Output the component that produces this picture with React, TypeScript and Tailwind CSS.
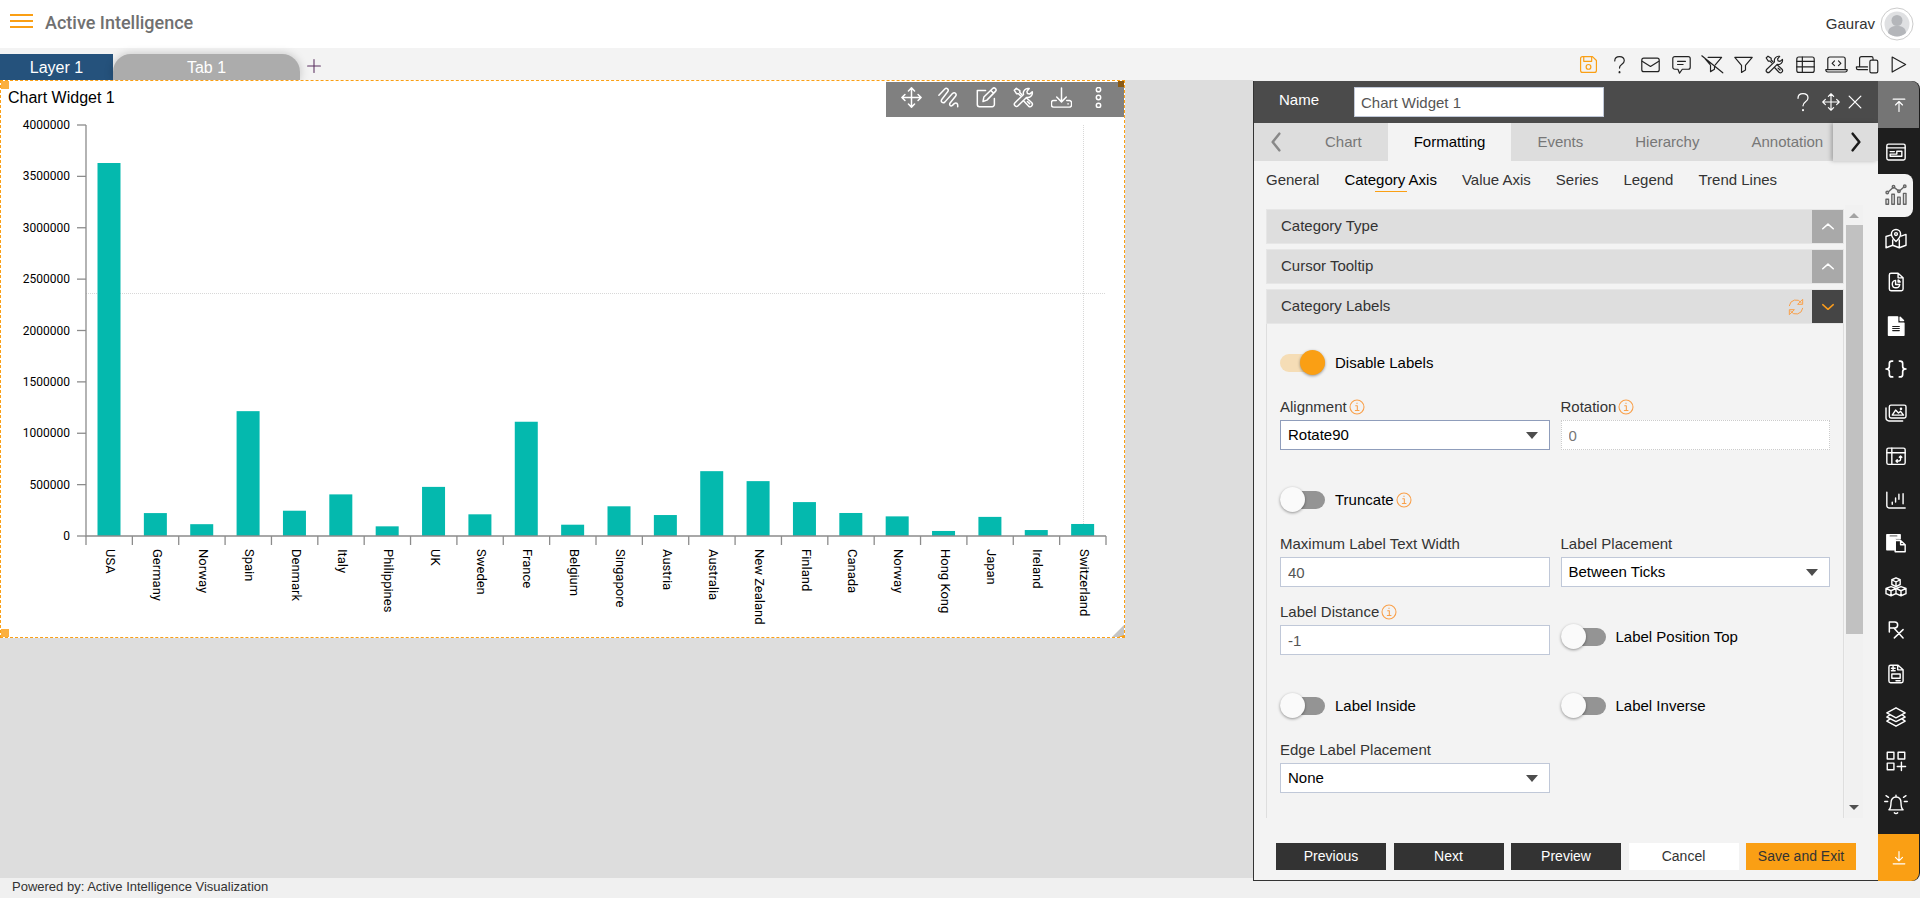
import { useState, type ReactNode } from "react";

interface IconProps {
  className?: string;
  width?: number;
  children: ReactNode;
}

function Icon({ className = "size-5", width = 1.5, children }: IconProps) {
  return (
    <svg
      viewBox="0 0 24 24"
      className={className}
      fill="none"
      stroke="currentColor"
      strokeWidth={width}
      strokeLinecap="round"
      strokeLinejoin="round"
      aria-hidden="true"
    >
      {children}
    </svg>
  );
}

const movePaths = (
  <path d="M12 1v22M1 12h22M8.5 4.5L12 1l3.5 3.5M8.5 19.5L12 23l3.5-3.5M4.5 8.5L1 12l3.5 3.5M19.5 8.5L23 12l-3.5 3.5" />
);

const toolsPaths = (
  <>
    <path d="M22 5.5l-3 2.6-2.5-.6-.6-2.5 2.600-3.200a5.400 5.400 0 0 0-6.500 6.800L2.300 18a2.400 2.400 0 0 0 3.500 3.500l9.600-9.600a5.400 5.400 0 0 0 6.600-6.400z" />
    <path d="M10 8.500L7.800 6.300V4.200L3.800 1.500 1.500 3.800l2.700 4h2.100l2.200 2.200" />
    <path d="M15.500 12.500l6 5.500a2.700 2.700 0 0 1-3.800 3.800l-5.700-6M16.500 16.500l2.500 2.500" />
  </>
);

const questionPaths = (
  <>
    <path d="M6 7.500C6 3.800 8.500 2 12 2s6 2 6 5.200c0 4.800-6 4.300-6 9.300" />
    <path d="M12 21.500v.5" strokeWidth={2.4} />
  </>
);

const pageTools = [
  {
    name: "Save",
    icon: (
      <>
        <path d="M2 4.500A2.500 2.500 0 0 1 4.500 2H17l5 5v12.500a2.500 2.500 0 0 1-2.500 2.500h-15A2.500 2.500 0 0 1 2 19.500z" />
        <path d="M6 2v6h10V2" />
        <circle cx="12" cy="15" r="3" />
      </>
    ),
  },
  { name: "Help", icon: questionPaths },
  {
    name: "Mail",
    icon: (
      <>
        <rect x="1" y="4" width="22" height="17" rx="2.500" />
        <path d="M1.500 8L12 14.500 22.500 8" />
      </>
    ),
  },
  {
    name: "Comment",
    icon: (
      <>
        <path d="M3.500 2h17A2.500 2.500 0 0 1 23 4.500v11a2.500 2.500 0 0 1-2.500 2.500H13l-3.500 5-2-5h-4A2.500 2.500 0 0 1 1 15.500v-11A2.500 2.500 0 0 1 3.500 2z" />
        <path d="M7 8h10M7 12h7" />
      </>
    ),
  },
  {
    name: "Clear filter",
    icon: <path d="M6.500 3H23.500l-8 9.500M9.500 13V21l5-3v-3M-1.500 1l26.500 21.500M2.500 4.500L9 12" />,
  },
  { name: "Filter", icon: <path d="M1 3h22L14.500 13v6l-5 3v-9z" /> },
  { name: "Settings", icon: toolsPaths },
  {
    name: "Table",
    icon: (
      <>
        <rect x="1" y="2.500" width="22" height="19.500" rx="2.500" />
        <path d="M1 8h22M1 15h22M8 2.500v19.500" />
      </>
    ),
  },
  {
    name: "Embed",
    icon: (
      <>
        <path d="M1 17V5a2.500 2.500 0 0 1 2.500-2.500h17A2.500 2.500 0 0 1 23 5v12M-1.500 18.500h27v.5a2.500 2.500 0 0 1-2.500 2.500H1a2.500 2.500 0 0 1-2.500-2.500z" />
        <path d="M9.500 7.500L6.500 10.500l3 3M14.500 7.500l3 3-3 3" />
      </>
    ),
  },
  {
    name: "Devices",
    icon: (
      <>
        <path d="M2 15V4.500A2.500 2.500 0 0 1 4.500 2H17a2 2 0 0 1 2 2v2M12 15H-2v1.500A2 2 0 0 0 0 18.500h12" />
        <rect x="15" y="6.500" width="10" height="16" rx="2" />
      </>
    ),
  },
  { name: "Play", icon: <path d="M4 2.500L21 12 4 21.500z" /> },
];

const widgetTools = [
  { name: "Move", icon: movePaths },
  {
    name: "Freeform",
    icon: (
      <path d="M1 9.500L7.500 2.500c2.500-2.400 5.500.5 3.500 3L4.500 14c-2 2.700 1 5.500 3.500 3L16.500 7.500c2.500-2.300 5.500.5 3.500 3L14 18c-1.800 2.600.5 4.500 2.500 3l2-2c2.500-2 4.500 0 4 3.500" />
    ),
  },
  {
    name: "Edit",
    icon: (
      <>
        <path d="M11 4H1.500v16A2.500 2.500 0 0 0 4 22.500h14.500A2.500 2.500 0 0 0 21 20v-7" />
        <path d="M8 16.500l1-5L19 1.800a2.200 2.200 0 0 1 3.200 3.200L12.500 15zM17 4l3 3" />
      </>
    ),
  },
  { name: "Settings", icon: toolsPaths },
  {
    name: "Download",
    icon: (
      <>
        <path d="M12 1v16M6.500 11.500L12 17l5.500-5.500" />
        <path d="M6 15.500H3a2.500 2.500 0 0 0-2.500 2.500v2.500A2.500 2.500 0 0 0 3 23h18a2.500 2.500 0 0 0 2.500-2.500V18a2.500 2.500 0 0 0-2.500-2.500h-3M19.500 19.200v.1" />
      </>
    ),
  },
  {
    name: "More",
    icon: (
      <>
        <circle cx="12" cy="3" r="2.500" />
        <circle cx="12" cy="12" r="2.500" />
        <circle cx="12" cy="21" r="2.500" />
      </>
    ),
  },
];

const sideTools = [
  {
    name: "Window",
    icon: (
      <>
        <rect x="1" y="2.500" width="22" height="19" rx="2" />
        <path d="M1 7h22M5 11.500h5M5 17h14v-6h-6v3.500H5z" />
      </>
    ),
  },
  {
    name: "Chart",
    icon: (
      <>
        <path d="M3 8l5.500-5M10 3l5 4M16.500 7L21.500 2.500" />
        <circle cx="1.500" cy="9" r="1.500" />
        <circle cx="9" cy="2" r="1.500" />
        <circle cx="15.500" cy="7.500" r="1.500" />
        <circle cx="22.500" cy="1.500" r="1.500" />
        <path d="M0 17h3v6H0zM7 11h3v12H7zM14 14.500h3V23h-3zM21 10h3v13h-3z" />
      </>
    ),
  },
  {
    name: "Map",
    icon: (
      <>
        <path d="M6.500 7L0 9v13.500l8-3 8 3 8-3V6.500l-6 2M8 13v6.500M16 13v9.500" />
        <path d="M12 15S6.500 10 6.500 6a5.500 5.500 0 0 1 11 0c0 4-5.500 9-5.500 9z" />
        <circle cx="12" cy="6" r="1.700" />
      </>
    ),
  },
  {
    name: "Report",
    icon: (
      <>
        <path d="M6 1.500h8.500L20.500 7v13.500a2 2 0 0 1-2 2H6a2 2 0 0 1-2-2v-17a2 2 0 0 1 2-2zM14.500 1.500V7h6" />
        <path d="M11.500 10a4.500 4.500 0 1 0 5 5h-5zM14.500 9.500a4 4 0 0 1 2.500 2.500h-2.500z" />
      </>
    ),
  },
  {
    name: "Document",
    icon: (
      <>
        <path d="M3 1h11v7.500h7.500V23H3z" fill="currentColor" />
        <path d="M17 1.500V5.500h4z" fill="currentColor" />
        <path d="M8 12.500h8M8 15h8M8 17.500h8" stroke="#1e1e1e" strokeWidth={1.3} />
      </>
    ),
  },
  {
    name: "Code",
    icon: (
      <path
        d="M8 2.500H7a3 3 0 0 0-3 3v3.500c0 2-1.500 3-4 3 2.500 0 4 1 4 3v3.500a3 3 0 0 0 3 3h1M16 2.500h1a3 3 0 0 1 3 3v3.500c0 2 1.500 3 4 3-2.500 0-4 1-4 3v3.500a3 3 0 0 1-3 3h-1"
        strokeWidth={2}
      />
    ),
  },
  {
    name: "Images",
    icon: (
      <>
        <rect x="4" y="2.500" width="20" height="15.500" rx="2" />
        <path d="M0 6v12a3.500 3.500 0 0 0 3.500 3.500H20M7.500 14.500l4-6 3.500 3.500 2.500-2 3.500 4.500z" />
        <circle cx="18" cy="7" r=".7" />
      </>
    ),
  },
  {
    name: "Pivot",
    icon: (
      <>
        <rect x="1" y="2.500" width="22" height="19.500" rx="2" />
        <path d="M1 8h22M7 2.500v19.500M12 18h3.500a2 2 0 0 0 2-2v-4M13.500 16.500L12 18l1.500 1.500M16 13.500l1.500-1.500 1.500 1.500" />
      </>
    ),
  },
  {
    name: "Candles",
    icon: (
      <path d="M1 2.500v16.500a2.500 2.500 0 0 0 2.500 2.500H23M7.500 14.500v2.500M11.500 9.500v5M15.500 5v6M20.500 4.500v12" />
    ),
  },
  {
    name: "Paste",
    icon: (
      <>
        <path d="M1 2h16v5h-6v13H1z" fill="currentColor" />
        <path d="M11 9h6.500l5.500 5v8.500H11zM17.500 9v5H23" />
        <path d="M5 3.500h8" stroke="#777777" strokeWidth={1.5} />
      </>
    ),
  },
  {
    name: "Blocks",
    icon: (
      <>
        <path d="M12 1l5 2.300v5.700L12 11.500 7 9V3.300zM7 3.300L12 6l5-2.700M12 6v5.500" />
        <path d="M6 11.500l6 2.200v6.300l-6 2.500-6-2.500v-6.300zM0 13.700L6 16.500l6-2.800M6 16.500v6" />
        <path d="M18 11.500l6 2.200v6.300l-6 2.500-6-2.500M12 13.700l6-2.200M12 13.700l6 2.800 6-2.800M18 16.500v6" />
      </>
    ),
  },
  {
    name: "Formula",
    icon: (
      <path d="M4 14.500V2.500h6.500a3.500 3.500 0 0 1 0 7H4M9.500 9.500L20.500 21.500M20.500 11.500L10 21.500" strokeWidth={1.8} />
    ),
  },
  {
    name: "Form",
    icon: (
      <>
        <path d="M5.500 1.500h9L20.500 7v13.500a2 2 0 0 1-2 2h-13a2 2 0 0 1-2-2v-17a2 2 0 0 1 2-2zM14 1.500V7h6.500" />
        <path d="M6.500 5H11M6.500 8H11M8.500 2v6M7 12h10v5H7zM12 20h5" />
      </>
    ),
  },
  {
    name: "Layers",
    icon: (
      <path d="M12 1L23 7l-11 6L1 7zM4.500 9.500L1 12l11 5.500L23 12l-3.500-2.500M4.500 14.500L1 17l11 6 11-6-3.500-2.500" />
    ),
  },
  {
    name: "Widgets",
    icon: (
      <>
        <path d="M1.500 1.500h8V9.500h-8zM14.500 1.500h8V9.500h-8zM1.500 14.500h8v8h-8z" />
        <path d="M18.500 13.500v10M13.500 18.500h10" />
      </>
    ),
  },
  {
    name: "Alerts",
    icon: (
      <path d="M3.500 19c2.500-2 2.500-4 2.500-8.500C6 6 8.500 3.500 12 3.500s6 2.500 6 7c0 4.500 0 6.500 2.500 8.500zM12 3.500V1.500M10 22.500c1 1.300 3 1.300 4 0M-1.500 9h3.500M22 9h3.500M0 2l3 2M24 2l-3 2" />
    ),
  },
];

const sales = [
  { country: "USA", value: 3630000 },
  { country: "Germany", value: 223000 },
  { country: "Norway", value: 115000 },
  { country: "Spain", value: 1215000 },
  { country: "Denmark", value: 246000 },
  { country: "Italy", value: 405000 },
  { country: "Philippines", value: 94000 },
  { country: "UK", value: 478000 },
  { country: "Sweden", value: 211000 },
  { country: "France", value: 1112000 },
  { country: "Belgium", value: 110000 },
  { country: "Singapore", value: 289000 },
  { country: "Austria", value: 204000 },
  { country: "Australia", value: 631000 },
  { country: "New Zealand", value: 534000 },
  { country: "Finland", value: 330000 },
  { country: "Canada", value: 224000 },
  { country: "Norway", value: 191000 },
  { country: "Hong Kong", value: 49000 },
  { country: "Japan", value: 186000 },
  { country: "Ireland", value: 58000 },
  { country: "Switzerland", value: 117000 },
];

const ticks = [0, 500000, 1000000, 1500000, 2000000, 2500000, 3000000, 3500000, 4000000];

// plot area inside the svg
const LEFT = 85;
const RIGHT = 1105;
const TOP = 9;
const BOTTOM = 420;

const yFor = (value: number) => BOTTOM - (value / 4000000) * (BOTTOM - TOP);

function BarChart() {
  const step = (RIGHT - LEFT) / sales.length;

  return (
    <svg
      viewBox="0 0 1123 521"
      className="block w-full font-[Roboto,'Liberation_Sans',sans-serif]"
      role="img"
      aria-label="Sales by country"
    >
      <g stroke="#d8d8d8" strokeDasharray="1 1">
        <path d={`M${LEFT} 177.500H${RIGHT}`} />
        <path d={`M1082.500 ${TOP}V${BOTTOM}`} />
      </g>
      {sales.map((item, i) => (
        <rect
          key={i}
          x={LEFT + step * i + 11.5}
          y={yFor(item.value)}
          width={23}
          height={BOTTOM - yFor(item.value)}
          fill="#04b9ae"
        />
      ))}
      <g stroke="#8c8c8c" strokeWidth={1.3}>
        <path d={`M${LEFT} ${TOP}V${BOTTOM}H${RIGHT}`} fill="none" />
        {ticks.map((tick) => (
          <path key={tick} d={`M${LEFT - 9} ${yFor(tick)}h9`} />
        ))}
        {[...sales, null].map((_, i) => (
          <path key={i} d={`M${LEFT + step * i} ${BOTTOM}v9`} />
        ))}
      </g>
      <g className="text-[12px]">
        {ticks.map((tick) => (
          <text key={tick} x={69} y={yFor(tick) + 4} textAnchor="end">
            {tick}
          </text>
        ))}
      </g>
      <g className="text-[13px]">
        {sales.map((item, i) => (
          <text
            key={i}
            transform={`translate(${LEFT + step * (i + 0.5) - 3} 433) rotate(90)`}
          >
            {item.country}
          </text>
        ))}
      </g>
    </svg>
  );
}

function InfoIcon() {
  return (
    <Icon className="size-4 text-[#f9a04a]" width={1.6}>
      <circle cx="12" cy="12" r="10.500" />
      <path d="M10 10h2.500v7M9.500 17.200h5.500M12 6.200v.5" />
    </Icon>
  );
}

interface FieldProps {
  id: string;
  label: string;
  info?: boolean;
  children: ReactNode;
}

function Field({ id, label, info, children }: FieldProps) {
  return (
    <div className="flex flex-col gap-1">
      <div className="flex h-[18px] items-center gap-0.5">
        <label htmlFor={id} className="leading-[18px] text-[#333333]">
          {label}
        </label>
        {info && <InfoIcon />}
      </div>
      {children}
    </div>
  );
}

interface SelectProps {
  id: string;
  options: string[];
  active?: boolean;
}

function Select({ id, options, active }: SelectProps) {
  return (
    <div className="relative">
      <select
        id={id}
        className={`h-[30px] w-full appearance-none border bg-white px-[7px] text-black ${
          active ? "border-[#8f9dbb]" : "border-[#c0c8d8]"
        }`}
      >
        {options.map((option) => (
          <option key={option}>{option}</option>
        ))}
      </select>
      <span className="pointer-events-none absolute top-3 right-3 border-x-[6px] border-t-[7px] border-x-transparent border-t-[#4d4d4d]" />
    </div>
  );
}

interface SwitchProps {
  id: string;
  label: string;
  info?: boolean;
  on?: boolean;
}

function Switch({ id, label, info, on = false }: SwitchProps) {
  const [checked, setChecked] = useState(on);

  return (
    <div className="flex h-[30px] items-center">
      <input
        id={id}
        type="checkbox"
        checked={checked}
        onChange={() => setChecked(!checked)}
        className="relative h-[18px] w-[45px] appearance-none rounded-full bg-[#949494] before:absolute before:-top-1 before:left-0 before:size-[25px] before:rounded-full before:bg-[#fafafa] before:shadow-[0_1px_3px_rgba(0,0,0,0.4)] checked:bg-[#f5ddb6] checked:before:left-5 checked:before:bg-[#fa9f14]"
      />
      <label htmlFor={id} className="mr-0.5 ml-2.5 text-black">
        {label}
      </label>
      {info && <InfoIcon />}
    </div>
  );
}

function AccordionHeader({ title, open }: { title: string; open?: boolean }) {
  return (
    <div className="flex h-[35px] items-center border border-[#e6e6e6] bg-[#dedede] pl-3.5 text-[#333333]">
      <h3 className="flex-1">{title}</h3>
      {open && (
        <button type="button" aria-label="Reset" className="mr-2 text-[#f9a04a]">
          <Icon className="size-4">
            <path d="M2 10a10 10 0 0 1 18-4.500M22 14a10 10 0 0 1-18 4.500M22 1v7h-7zM2 23v-7h7z" />
          </Icon>
        </button>
      )}
      <button
        type="button"
        aria-label={open ? "Collapse" : "Expand"}
        className={`flex h-[33px] w-[31px] items-center justify-center ${
          open ? "bg-[#454545] text-[#f99b1c]" : "bg-[#a9a9a9] text-white"
        }`}
      >
        <Icon className="size-3.5" width={2.6}>
          <path d={open ? "M3 8l9 8 9-8" : "M3 15l9-8 9 8"} />
        </Icon>
      </button>
    </div>
  );
}

const tabs = ["Chart", "Formatting", "Events", "Hierarchy", "Annotation"];
const subTabs = ["General", "Category Axis", "Value Axis", "Series", "Legend", "Trend Lines"];

function PropertiesPanel() {
  const [name, setName] = useState("Chart Widget 1");

  return (
    <section className="flex w-[625px] shrink-0 flex-col border-b border-l border-[#333333] bg-[#f3f3f3] text-[15px]">
      <div className="flex h-[42px] items-center bg-[#4b4b4b] text-white">
        <label htmlFor="widget-name" className="w-[100px] pb-1 pl-[25px]">
          Name
        </label>
        <input
          id="widget-name"
          className="h-[30px] w-[250px] border border-[#c0c8d8] bg-white px-1.5 text-[#555555]"
          value={name}
          onChange={(e) => setName(e.target.value)}
        />
        <div className="ml-auto flex items-center gap-2 pr-4">
          <button type="button" aria-label="Help">
            <Icon className="h-5 w-[22px]">{questionPaths}</Icon>
          </button>
          <button type="button" aria-label="Move">
            <Icon className="size-[18px]">{movePaths}</Icon>
          </button>
          <button type="button" aria-label="Close">
            <Icon className="size-3.5" width={2.2}>
              <path d="M2 2l20 20M22 2L2 22" />
            </Icon>
          </button>
        </div>
      </div>

      <div className="flex h-[38px] bg-[#dddddd]">
        <button type="button" aria-label="Scroll left" className="flex w-[45px] items-center justify-center pr-0.5 text-[#888888]">
          <Icon width={3}>
            <path d="M16 2L8 12l8 10" />
          </Icon>
        </button>
        <div className="flex flex-1 overflow-hidden">
          {tabs.map((tab) => (
            <button
              key={tab}
              type="button"
              className={`px-[26px] ${
                tab === "Formatting" ? "bg-[#f3f3f3] text-black" : "text-[#777777]"
              }`}
            >
              {tab}
            </button>
          ))}
        </div>
        <button type="button" aria-label="Scroll right" className="flex w-[45px] items-center justify-center text-[#1a1a1a] shadow-[-2px_0_4px_rgba(0,0,0,0.25)]">
          <Icon width={3}>
            <path d="M8 2l8 10-8 10" />
          </Icon>
        </button>
      </div>

      <div className="flex h-[44px] gap-[25px] pt-2.5 pl-3">
        {subTabs.map((tab) => (
          <button
            key={tab}
            type="button"
            className={`flex flex-col items-center leading-[18px] ${
              tab === "Category Axis" ? "text-black" : "text-[#333333]"
            }`}
          >
            {tab}
            {tab === "Category Axis" && <span className="mt-0.5 h-px w-8 bg-[#fa9f14]" />}
          </button>
        ))}
      </div>

      <div className="flex flex-1">
        <div className="ml-3 flex flex-1 flex-col gap-[5px] pt-1">
          <AccordionHeader title="Category Type" />
          <AccordionHeader title="Cursor Tooltip" />
          <div className="flex flex-1 flex-col">
            <AccordionHeader title="Category Labels" open />
            <form className="flex-1 border-x border-[#dedede] px-[13px] pt-6">
              <Switch id="disable-labels" label="Disable Labels" on />
              <div className="mt-5 grid grid-cols-2 gap-x-[11px]">
                <Field id="alignment" label="Alignment" info>
                  <Select id="alignment" options={["Rotate90", "Rotate45", "None"]} active />
                </Field>
                <Field id="rotation" label="Rotation" info>
                  <input
                    id="rotation"
                    className="h-[30px] border border-dotted border-[#cccccc] bg-white px-[7px] text-[#777777]"
                    defaultValue="0"
                    disabled
                  />
                </Field>
              </div>
              <div className="mt-[35px]">
                <Switch id="truncate" label="Truncate" info />
              </div>
              <div className="mt-5 grid grid-cols-2 gap-x-[11px]">
                <Field id="max-width" label="Maximum Label Text Width">
                  <input
                    id="max-width"
                    className="h-[30px] border border-[#c0c8d8] bg-white px-[7px] text-[#555555]"
                    defaultValue="40"
                  />
                </Field>
                <Field id="placement" label="Label Placement">
                  <Select id="placement" options={["Between Ticks", "On Ticks"]} />
                </Field>
              </div>
              <div className="mt-4 grid grid-cols-2 items-end gap-x-[11px]">
                <Field id="distance" label="Label Distance" info>
                  <input
                    id="distance"
                    className="h-[30px] border border-[#c0c8d8] bg-white px-[7px] text-[#555555]"
                    defaultValue="-1"
                  />
                </Field>
                <div className="pb-[3px]">
                  <Switch id="position-top" label="Label Position Top" />
                </div>
              </div>
              <div className="mt-9 grid grid-cols-2 gap-x-[11px]">
                <Switch id="inside" label="Label Inside" />
                <Switch id="inverse" label="Label Inverse" />
              </div>
              <div className="mt-5 grid grid-cols-2 gap-x-[11px]">
                <Field id="edge" label="Edge Label Placement">
                  <Select id="edge" options={["None", "Shift", "Hide"]} />
                </Field>
              </div>
            </form>
          </div>
        </div>
        <div className="mr-[15px] ml-px flex w-[18px] flex-col items-center bg-[#f1f1f1] pt-2 pb-2">
          <span className="border-x-[5px] border-b-[5px] border-x-transparent border-b-[#a3a3a3]" />
          <span className="mt-[7px] h-[409px] w-[17px] bg-[#c1c1c1]" />
          <span className="mt-auto border-x-[5px] border-t-[5px] border-x-transparent border-t-[#505050]" />
        </div>
      </div>

      <div className="flex h-[62px] items-end justify-between px-[22px] pb-2.5 text-[14px]">
        <button type="button" className="h-[27px] w-[110px] bg-[#333333] text-white">Previous</button>
        <button type="button" className="h-[27px] w-[110px] bg-[#333333] text-white">Next</button>
        <button type="button" className="h-[27px] w-[110px] bg-[#333333] text-white">Preview</button>
        <button type="button" className="h-[27px] w-[110px] bg-white text-[#333333]">Cancel</button>
        <button type="button" className="h-[27px] w-[110px] bg-[#fa9f14] text-[#333333]">Save and Exit</button>
      </div>
    </section>
  );
}

function SideBar() {
  return (
    <nav className="flex w-[42px] shrink-0 flex-col rounded-r-lg bg-[#1e1e1e] text-white">
      <button type="button" aria-label="Collapse top" className="mr-px flex h-[47px] items-center justify-center rounded-tr-lg bg-[#757575]">
        <Icon className="size-3.5" width={2}>
          <path d="M2 2h20M12 23V6M6 12l6-6 6 6" />
        </Icon>
      </button>
      <div className="flex flex-1 flex-col pt-0.5 pb-2">
        {sideTools.map((tool) => (
          <button
            key={tool.name}
            type="button"
            aria-label={tool.name}
            className={`mr-[7px] flex flex-1 items-center justify-center ${
              tool.name === "Chart" ? "rounded-r-lg bg-[#f3f3f3] text-[#666666]" : ""
            }`}
          >
            <Icon className="size-5 overflow-visible" width={1.7}>
              {tool.icon}
            </Icon>
          </button>
        ))}
      </div>
      <button type="button" aria-label="Collapse bottom" className="mr-px flex h-[47px] items-center justify-center rounded-br-lg bg-[#fa9f14]">
        <Icon className="size-3.5" width={2}>
          <path d="M2 22h20M12 1v16M6 11l6 6 6-6" />
        </Icon>
      </button>
    </nav>
  );
}

function ChartWidget() {
  return (
    <article className="relative w-[1125px] border border-dashed border-[#fa9f14] bg-white">
      <span className="absolute top-0 left-0 size-2 bg-[#fbb040]" />
      <span className="absolute bottom-0 left-0 size-2 bg-[#fbb040]" />
      <h2 className="h-[35px] pt-[5px] pl-[7px] text-[16px] leading-6 text-black">Chart Widget 1</h2>
      <div className="absolute top-px right-0 flex h-[35px] w-[238px] items-center justify-between bg-[#808080] pr-[15px] pb-1 pl-[15px] text-white">
        {widgetTools.map((tool) => (
          <button key={tool.name} type="button" aria-label={tool.name}>
            <Icon className="size-[21px]" width={1.7}>
              {tool.icon}
            </Icon>
          </button>
        ))}
      </div>
      <span className="absolute top-0 right-0 size-1.5 bg-[#8a5a14]" />
      <BarChart />
      <svg viewBox="0 0 12 12" className="absolute right-0 bottom-0 size-3" aria-hidden="true">
        <path d="M12 0v12H0z" fill="#c4c4c4" />
        <path d="M12 10v2H6z" fill="#fa9f14" />
      </svg>
    </article>
  );
}

export default function App() {
  return (
    <div className="flex min-h-screen flex-col bg-[#f0f0f0] font-['Liberation_Sans',Arial,sans-serif]">
      <header className="flex h-12 items-center bg-white pr-1.5 pl-2.5">
        <button type="button" aria-label="Menu" className="mb-1.5 flex w-[23px] flex-col gap-1">
          <span className="h-0.5 bg-[#fa9f14]" />
          <span className="h-0.5 bg-[#fa9f14]" />
          <span className="h-0.5 bg-[#fa9f14]" />
        </button>
        <h1 className="mb-1 ml-3 font-[Roboto,'Liberation_Sans',sans-serif] text-[18px] font-medium text-[#707070]">
          Active Intelligence
        </h1>
        <span className="ml-auto text-[15px] text-[#333333]">Gaurav</span>
        <svg viewBox="0 0 34 34" className="ml-[5px] size-[34px]" aria-hidden="true">
          <circle cx="17" cy="17" r="16" fill="#ffffff" stroke="#cccccc" />
          <circle cx="17" cy="17" r="12.500" fill="#dfe0e2" />
          <circle cx="17" cy="13.500" r="5.500" fill="#b4b6ba" />
          <path d="M8 26c.5-5.500 4-7 9-7s8.500 1.500 9 7c-5 4.500-13 4.500-18 0z" fill="#b4b6ba" />
        </svg>
      </header>

      <div className="flex h-8 items-end bg-[#f3f3f3]">
        <button type="button" className="h-[26px] w-[113px] bg-[#25527c] pt-px text-[16px] text-white">
          Layer 1
        </button>
        <button
          type="button"
          className="h-[26px] w-[187px] rounded-t-[18px] bg-[#acacac] pt-px text-[16px] text-white shadow-[0_0_10px_rgba(0,0,0,0.2)]"
        >
          Tab 1
        </button>
        <button type="button" aria-label="Add tab" className="mb-[7px] ml-[7px] text-[#5a3060]">
          <Icon className="size-3.5" width={1.8}>
            <path d="M12 1v22M1 12h22" />
          </Icon>
        </button>
        <div className="mb-1.5 ml-auto flex gap-3 pr-3 text-[#222222]">
          {pageTools.map((tool) => (
            <button
              key={tool.name}
              type="button"
              aria-label={tool.name}
              className={tool.name === "Save" ? "text-[#fa9f14]" : ""}
            >
              <Icon className="size-[19px] overflow-visible">{tool.icon}</Icon>
            </button>
          ))}
        </div>
      </div>

      <div className="flex flex-1">
        <div className="flex min-w-0 flex-1 flex-col">
          <main className="flex-1 overflow-hidden bg-[#dddddd]">
            <ChartWidget />
          </main>
          <footer className="h-5 pl-3 text-[13px] leading-[18px] text-[#333333]">
            Powered by: Active Intelligence Visualization
          </footer>
        </div>
        <div className="mt-px mb-[17px] flex">
          <PropertiesPanel />
          <SideBar />
        </div>
      </div>
    </div>
  );
}
